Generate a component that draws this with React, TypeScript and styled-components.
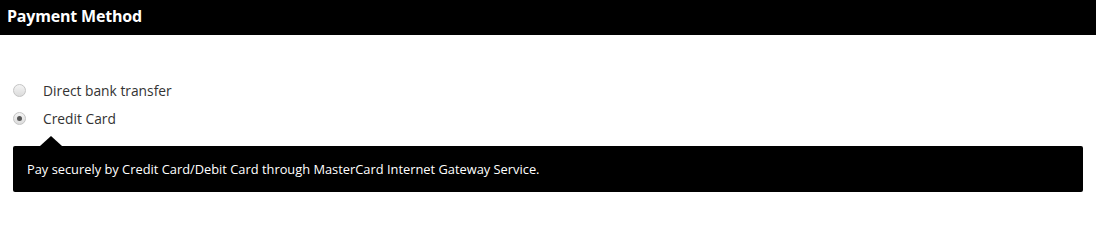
import React, { useState } from 'react';
import styled, { createGlobalStyle } from 'styled-components';

const GlobalStyle = createGlobalStyle`
  html, body {
    margin: 0;
    padding: 0;
    background: #fff;
    font-family: 'Open Sans', 'Liberation Sans', sans-serif;
  }
`;

const methods = [
  { id: 'bank', label: 'Direct bank transfer' },
  { id: 'card', label: 'Credit Card' },
];

const App: React.FC = () => {
  const [selected, setSelected] = useState('card');

  return (
    <>
      <GlobalStyle />
      <Section>
        <Header>Payment Method</Header>
        <Methods>
          {methods.map((m) => (
            <MethodRow key={m.id}>
              <Radio
                type="radio"
                name="payment"
                checked={selected === m.id}
                onChange={() => setSelected(m.id)}
              />
              <Label>{m.label}</Label>
            </MethodRow>
          ))}
        </Methods>
        {selected === 'card' && (
          <Notice>Pay securely by Credit Card/Debit Card through MasterCard Internet Gateway Service.</Notice>
        )}
        {selected === 'bank' && (
          <Notice>Make your payment directly into our bank account.</Notice>
        )}
      </Section>
    </>
  );
};

const Section = styled.section`
  width: 1096px;
  padding-bottom: 27px;
`;

const Header = styled.h3`
  margin: 0;
  height: 35px;
  line-height: 33px;
  padding: 0 7px;
  background: #000;
  color: #fff;
  font-size: 16px;
  font-weight: 700;
  letter-spacing: -0.2px;
`;

const Methods = styled.div`
  display: flex;
  flex-direction: column;
  gap: 10px;
  padding: 46px 0 0 13px;
`;

const MethodRow = styled.label`
  display: flex;
  align-items: center;
  height: 18px;
  cursor: pointer;
`;

const Radio = styled.input`
  appearance: none;
  box-sizing: border-box;
  width: 13px;
  height: 13px;
  margin: 0 17px 0 0;
  border-radius: 50%;
  border: 1px solid #c4c4c4;
  background: linear-gradient(#f4f4f4, #dcdcdc);
  position: relative;
  cursor: pointer;

  &:checked::after {
    content: '';
    position: absolute;
    left: 3px;
    top: 3px;
    width: 5px;
    height: 5px;
    border-radius: 50%;
    background: #555;
  }
`;

const Label = styled.span`
  font-size: 13.8px;
  color: #333;
`;

const Notice = styled.div`
  position: relative;
  margin: 19px 13px 0 13px;
  height: 46px;
  box-sizing: border-box;
  padding: 0 14px;
  display: flex;
  align-items: center;
  background: #000;
  color: #fff;
  font-size: 12.85px;
  border-radius: 2px;

  &::before {
    content: '';
    position: absolute;
    top: -10px;
    left: 27px;
    border-left: 11px solid transparent;
    border-right: 11px solid transparent;
    border-bottom: 10px solid #000;
  }
`;

export default App;
